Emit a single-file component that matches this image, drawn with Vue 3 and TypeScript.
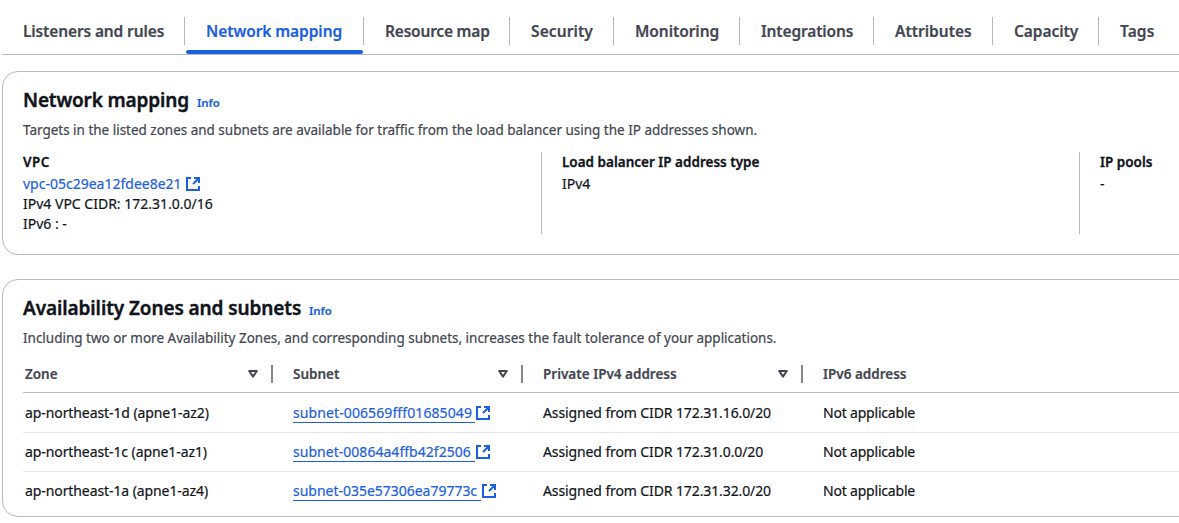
<script setup lang="ts">
interface Tab { label: string; width: number; active?: boolean; spacing: number }
interface Row { zone: string; subnet: string; subnetWidth: number; subnetSpacing: number; ipv4: string; ipv6: string }

const tabs: Tab[] = [
  { label: 'Listeners and rules', width: 183, spacing: -0.13 },
  { label: 'Network mapping', width: 179, active: true, spacing: -0.08 },
  { label: 'Resource map', width: 146, spacing: -0.2 },
  { label: 'Security', width: 104, spacing: 0.1 },
  { label: 'Monitoring', width: 126, spacing: -0.07 },
  { label: 'Integrations', width: 134, spacing: -0.14 },
  { label: 'Attributes', width: 119, spacing: 0 },
  { label: 'Capacity', width: 106, spacing: -0.07 },
  { label: 'Tags', width: 80, spacing: 0.1 },
]

const columns = ['Zone', 'Subnet', 'Private IPv4 address', 'IPv6 address']

const rows: Row[] = [
  { zone: 'ap-northeast-1d (apne1-az2)', subnet: 'subnet-006569fff01685049', subnetWidth: 182, subnetSpacing: 0.1, ipv4: 'Assigned from CIDR 172.31.16.0/20', ipv6: 'Not applicable' },
  { zone: 'ap-northeast-1c (apne1-az1)', subnet: 'subnet-00864a4ffb42f2506', subnetWidth: 182, subnetSpacing: 0.03, ipv4: 'Assigned from CIDR 172.31.0.0/20', ipv6: 'Not applicable' },
  { zone: 'ap-northeast-1a (apne1-az4)', subnet: 'subnet-035e57306ea79773c', subnetWidth: 188, subnetSpacing: -0.02, ipv4: 'Assigned from CIDR 172.31.32.0/20', ipv6: 'Not applicable' },
]
</script>

<template>
  <main class="page">
    <nav class="tabs">
      <div v-for="t in tabs" :key="t.label" class="tab" :class="{ active: t.active }" :style="{ width: t.width + 'px' }">
        <span :style="{ letterSpacing: t.spacing + 'px' }">{{ t.label }}</span>
      </div>
    </nav>

    <section class="card mapping">
      <header class="head">
        <h2 class="h-map">Network mapping</h2><a class="info">Info</a>
      </header>
      <p class="desc">Targets in the listed zones and subnets are available for traffic from the load balancer using the IP addresses shown.</p>
      <div class="details">
        <div class="detail">
          <div class="label vpc-label">VPC</div>
          <div class="link-line">
            <a class="vpc">vpc-05c29ea12fdee8e21</a>
            <svg class="ext" viewBox="0 0 14 14"><path d="M5 1H1v12h12V9M8 1h5v5M13 1 7 7" /></svg>
          </div>
          <div>IPv4 VPC CIDR: 172.31.0.0/16</div>
          <div>IPv6 : -</div>
        </div>
        <div class="detail">
          <div class="label">Load balancer IP address type</div>
          <div class="value">IPv4</div>
        </div>
        <div class="detail">
          <div class="label">IP pools</div>
          <div class="value">-</div>
        </div>
      </div>
    </section>

    <section class="card zones">
      <header class="head">
        <h2 class="h-zones">Availability Zones and subnets</h2><a class="info">Info</a>
      </header>
      <p class="desc">Including two or more Availability Zones, and corresponding subnets, increases the fault tolerance of your applications.</p>
      <div class="table">
        <div class="tr th-row">
          <div v-for="(c, i) in columns" :key="c" class="th">
            <span>{{ c }}</span>
            <svg v-if="i < 3" class="sort" viewBox="0 0 10 8"><path d="M1.2 1h7.6L5 6.6z" /></svg>
          </div>
        </div>
        <div v-for="r in rows" :key="r.zone" class="tr">
          <div class="td zone">{{ r.zone }}</div>
          <div class="td">
            <a class="subnet" :style="{ width: r.subnetWidth + 'px', letterSpacing: r.subnetSpacing + 'px' }">{{ r.subnet }}</a>
            <svg class="ext" viewBox="0 0 14 14"><path d="M5 1H1v12h12V9M8 1h5v5M13 1 7 7" /></svg>
          </div>
          <div class="td ipv4">{{ r.ipv4 }}</div>
          <div class="td ipv6">{{ r.ipv6 }}</div>
        </div>
      </div>
    </section>
  </main>
</template>

<style>
html, body { overflow: hidden; background: #fff; }
</style>

<style scoped>
* { box-sizing: border-box; }
.page {
  width: 1179px;
  height: 523px;
  overflow: hidden;
  padding-left: 2px;
  font: 400 14px/20px "Noto Sans", "Open Sans", sans-serif;
  color: #0f141a;
  white-space: nowrap;
  -webkit-text-stroke: 0.2px currentColor;
}
.tabs {
  display: flex;
  height: 55px;
  padding-top: 17px;
  border-bottom: 1px solid #b6b6be;
}
.tab {
  position: relative;
  flex: none;
  height: 28px;
  padding-left: 21px;
  font-size: 15.5px;
  font-weight: 600;
  line-height: 28px;
  color: #424650;
  border-right: 1px solid #b6b6be;
}
.tab:last-child { border-right: 0; }
.tab.active { color: #1b60df; }
.tab.active::after {
  content: "";
  position: absolute;
  left: 1px;
  right: 0;
  top: 33px;
  height: 4px;
  border-radius: 2px;
  background: #1b5fdc;
}
.card {
  width: 1300px;
  border: 1px solid #b9b9c1;
  border-radius: 16px;
  padding: 16px 0 0 20px;
}
.mapping { margin-top: 16px; height: 184px; }
.zones { margin-top: 24px; height: 238px; }
.head {
  display: flex;
  align-items: baseline;
  gap: 8px;
  height: 24px;
}
h2 {
  margin: 0;
  font-size: 19px;
  font-weight: 600;
  line-height: 24px;
  -webkit-text-stroke-width: 0.4px;
}
.h-map { width: 166px; letter-spacing: -0.16px; }
.h-zones { width: 278px; letter-spacing: -0.1px; }
.info {
  font-size: 11.5px;
  font-weight: 600;
  color: #1b60df;
}
.desc {
  margin: 8px 0 0;
  font-size: 13.5px;
  letter-spacing: -0.013px;
  color: #424650;
}
.details { display: flex; margin-top: 12px; }
.detail {
  flex: none;
  width: 538px;
  height: 82px;
}
.detail + .detail { border-left: 1px solid #b9b9c1; padding-left: 20px; }
.detail:first-child { width: 518px; }
.label {
  font-size: 13.5px;
  font-weight: 600;
  margin-bottom: 2px;
  -webkit-text-stroke-width: 0.3px;
}
.vpc-label { letter-spacing: 0.5px; }
.link-line { display: flex; align-items: center; }
.vpc { width: 163px; color: #1b60df; }
.ext {
  flex: none;
  width: 14px;
  height: 14px;
  fill: none;
  stroke: #1b60df;
  stroke-width: 2;
}
.table { margin-top: 7px; width: 1260px; }
.tr {
  display: grid;
  grid-template-columns: 268px 250px 280px 1fr;
  height: 39px;
  padding-left: 2px;
  border-bottom: 1px solid #e6e6ea;
}
.tr:nth-child(2) { height: 40px; }
.tr:last-child { border-bottom: 0; height: 38px; }
.th-row {
  height: 38px;
  border-bottom-color: #b9b9c1;
}
.th {
  display: flex;
  align-items: center;
  justify-content: space-between;
  height: 18px;
  margin: 10px 20px 0 0;
  padding-right: 13px;
  border-right: 2px solid #82868f;
  font-size: 13.5px;
  font-weight: 600;
  color: #424650;
}
.th:last-child { border: 0; }
.sort {
  width: 10px;
  height: 8px;
  fill: none;
  stroke: #424650;
  stroke-width: 2;
  stroke-linejoin: round;
}
.td { display: flex; align-items: center; }
.zone { letter-spacing: -0.09px; }
.subnet {
  flex: none;
  margin-right: 1px;
  line-height: 19px;
  color: #1b60df;
  border-bottom: 1px solid #1b60df;
}
.ipv4 { letter-spacing: -0.11px; }
.ipv6 { letter-spacing: -0.2px; }
</style>
